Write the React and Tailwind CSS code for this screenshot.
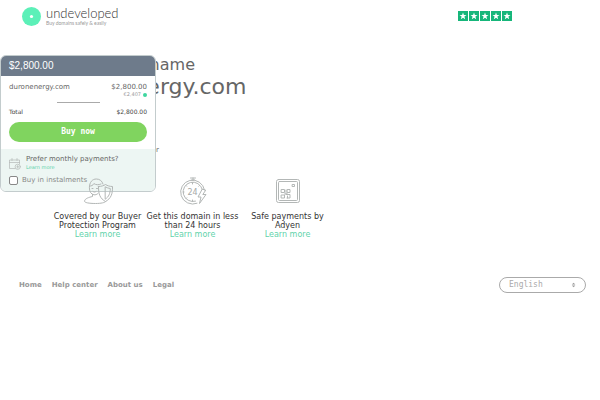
import { clsx } from "clsx";

const stroke = { fill: "none", stroke: "#b3b7b6", strokeWidth: 1, strokeLinecap: "round", strokeLinejoin: "round" };

function ShieldIcon() {
  return (
    <svg className="h-7 w-8" viewBox="0 0 32 28" aria-hidden="true" {...stroke}>
      <path d="M16 16.500c-1.200 1-2.600 1.500-4 1.300-3-.4-4.600-3.400-4.600-7C7.400 5 10.500 2 14.300 2c3.500 0 5.900 2 6.700 5" />
      <path d="M7.500 9c2 .2 3.400-.6 4.400-2.400 2 1.400 4.700 1.500 7.100.4M10 11.500h1M14.500 11.500h1M11 14.500c1 .8 2 .8 3 0" />
      <path d="M10.500 17.500v2c-3.500.8-7.600 2-8 4.600-.2 1.500 4.500 2.400 11 2.400 5.500 0 9.500-.8 10.500-2.200" />
      <path d="M16.500 9.500c3 0 5-.8 7-2 2 1.200 4 2 7 2 .2 7.500-1.500 12-7 15-5.500-3-7.200-7.500-7-15z" />
      <path d="M23.500 10c1.600.8 3 1.300 4.800 1.500-.1 5-1.400 8.200-4.800 10.500z" />
    </svg>
  );
}

function ClockIcon() {
  return (
    <svg className="h-7 w-8" viewBox="0 0 32 28" aria-hidden="true" {...stroke}>
      <path d="M13.500 1h5M14.500 3h3M16 1v2" />
      <path d="M20 26.300A12 12 0 1 1 27.500 13" />
      <path d="M18.500 24.200A9.700 9.700 0 1 1 25.300 12.500" />
      <path d="M15.500 5.500v1.500M6 15h1M9 8.500l.7.700M22.500 8.500l-.7.700M9 21.500l.7-.7M15.500 23v1.300" />
      <text x="10.500" y="17.500" fontSize="8" fontFamily="DejaVu Sans" fill="#a5a9a8" stroke="none">24</text>
      <path d="M25 12.500L21 20h3l-1.500 6.500 6.500-9h-3.200l2.700-4z" />
    </svg>
  );
}

function ChipIcon() {
  return (
    <svg className="h-7 w-8" viewBox="0 0 32 28" aria-hidden="true" {...stroke}>
      <rect x="4.500" y="2.500" width="23" height="23" rx="2" />
      <rect x="6.500" y="4.500" width="19" height="19" rx="1" />
      <rect x="20.500" y="7.500" width="2" height="2" />
      <path d="M9.500 12.500h3v3h-3zM15.500 12.500h2.500v3h-2.500zM9.500 18h3v3h-3zM14 13v4.500h4v3.500h-3M12.500 17h3M15.500 19v2" />
    </svg>
  );
}

function CalendarIcon() {
  return (
    <svg className="mt-1 size-3" viewBox="0 0 12 12" aria-hidden="true" {...stroke} strokeWidth={0.7}>
      <path d="M6 10.500H.5V2h10v4M.5 4.500h10M3 .5v2M8 .5v2" />
      <circle cx="8.700" cy="8.800" r="2.600" />
      <path d="M8.700 7.500v2.600M7.800 8.800h1.800" />
    </svg>
  );
}

function Logo() {
  return (
    <a href="#" className="flex items-center gap-[5px]">
      <svg className="size-[19px]" viewBox="0 0 20 20" aria-hidden="true">
        <circle cx="10" cy="10" r="10" fill="#5cf0b8" />
        <circle cx="10" cy="10" r="1.700" fill="#fff" />
      </svg>
      <span className="flex flex-col">
        <span className="font-['Lato'] text-[13px] leading-[13px] font-light text-[#333]">undeveloped</span>
        <span className="font-['Lato'] text-[5px] leading-[6px] text-[#999]">Buy domains safely &amp; easily</span>
      </span>
    </a>
  );
}

function Rating() {
  return (
    <div className="flex gap-px" role="img" aria-label="5 out of 5 stars">
      {[1, 2, 3, 4, 5].map((n) => (
        <svg key={n} className="size-[10px]" viewBox="0 0 10 10">
          <rect width="10" height="10" fill="#16b67a" />
          <path d="M5 1.500l.9 2.500h2.600L6.400 5.600l.8 2.600L5 6.700 2.800 8.200l.8-2.600L1.500 4h2.600z" fill="#fff" />
        </svg>
      ))}
    </div>
  );
}

function OrderCard() {
  return (
    <aside className="absolute top-0 left-0 w-[156px] overflow-hidden rounded-md border border-[#c3cccd] bg-white text-[7px] leading-[10px] text-[#666]">
      <h2 className="bg-[#6e7b8b] px-2 font-['Liberation_Sans'] text-[10px] leading-5 text-white">$2,800.00</h2>
      <div className="px-2 pt-[6px] pb-[7px]">
        <div className="flex justify-between">
          <span>duronenergy.com</span>
          <span>$2,800.00</span>
        </div>
        <div className="flex items-center justify-end gap-[2px] text-[5px] leading-[5px] text-[#999]">
          €2,407
          <span className="size-1 rounded-full bg-[#3fd6a0]" />
        </div>
        <hr className="mx-auto mt-[5px] w-[43px] border-[#aaa]" />
        <div className="mt-1 flex justify-between text-[6px] text-[#444]">
          <span>Total</span>
          <span>$2,800.00</span>
        </div>
        <button className="mt-[5px] h-5 w-full rounded-full bg-[#80d45f] font-['DejaVu_Sans_Mono'] text-[8px] font-bold text-white">
          Buy now
        </button>
      </div>
      <div className="bg-[#edf6f3] px-2 pt-[5px] pb-[6px]">
        <div className="flex gap-[5px]">
          <CalendarIcon />
          <div>
            <p>Prefer monthly payments?</p>
            <a href="#" className="block text-[5px] leading-[6px] text-[#5fd3ab]">Learn more</a>
          </div>
        </div>
        <label className="mt-[5px] flex items-center gap-1 text-[#888]">
          <input type="checkbox" className="size-[9px] appearance-none rounded-xs border border-[#888] bg-white" />
          Buy in instalments
        </label>
      </div>
    </aside>
  );
}

function Feature({ icon, lines, className }) {
  return (
    <div className={clsx("flex w-[95px] flex-col items-center text-center", className)}>
      {icon}
      <h3 className="mt-[7px] text-[8px] leading-[9px] whitespace-nowrap text-[#333]">
        {lines[0]}
        <br />
        {lines[1]}
      </h3>
      <a href="#" className="text-[8px] leading-[9px] text-[#5fd3ab]">Learn more</a>
    </div>
  );
}

export default function App() {
  return (
    <div className="min-h-screen bg-white font-['DejaVu_Sans',sans-serif]">
      <header className="flex items-start justify-between pt-[7px] pr-[88px] pl-[22px]">
        <Logo />
        <div className="pt-1">
          <Rating />
        </div>
      </header>
      <main className="relative mt-[29px]">
        <div className="pl-[55px] text-[#666]">
          <h1>
            <span className="block w-[140px] text-right text-[16px] leading-5">domain name</span>
            <span className="block text-[22px] leading-6">duronenergy.com</span>
          </h1>
          <p className="mt-[46px] w-[104px] text-right text-[7px] leading-[10px]">is for sale by its owner</p>
        </div>
        <OrderCard />
        <section className="relative mt-[22px] flex pl-[50px]">
          <Feature icon={<ShieldIcon />} lines={["Covered by our Buyer", "Protection Program"]} />
          <Feature icon={<ClockIcon />} lines={["Get this domain in less", "than 24 hours"]} />
          <Feature icon={<ChipIcon />} lines={["Safe payments by", "Adyen"]} />
        </section>
      </main>
      <footer className="mt-[38px] flex items-center justify-between pr-[14px] pl-[19px]">
        <nav className="flex gap-[10px] text-[7px] font-bold text-[#999]">
          <a href="#">Home</a>
          <a href="#">Help center</a>
          <a href="#">About us</a>
          <a href="#">Legal</a>
        </nav>
        <div className="flex h-4 w-[87px] items-center rounded-full border border-[#aaa] pr-2 pl-[9px]">
          <select
            aria-label="Language"
            className="w-full appearance-none bg-transparent font-['DejaVu_Sans_Mono'] text-[8px] text-[#aaa]"
          >
            <option>English</option>
          </select>
          <svg className="size-2" viewBox="0 0 8 8" aria-hidden="true">
            <path d="M2 3.500L4 1.500l2 2zM2 4.500l2 2 2-2z" fill="#999" />
          </svg>
        </div>
      </footer>
    </div>
  );
}
